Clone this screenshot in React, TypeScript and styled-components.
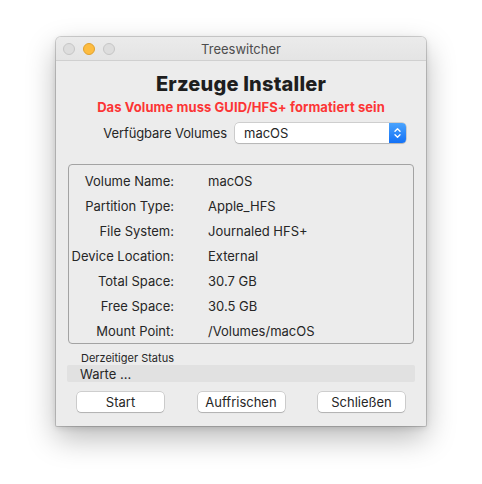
import React from 'react';
import styled, { createGlobalStyle } from 'styled-components';

const GlobalStyle = createGlobalStyle`
  html, body {
    margin: 0;
    background: #ffffff;
  }
  body {
    font-family: Inter, "Noto Sans", sans-serif;
    color: #262626;
    -webkit-font-smoothing: antialiased;
  }
`;

const Page = styled.div`
  width: 482px;
  height: 484px;
  box-sizing: border-box;
  padding: 37px 0 0 56px;
  overflow: hidden;
`;

const Window = styled.div`
  width: 370px;
  height: 389px;
  display: flex;
  flex-direction: column;
  background: #ececec;
  border-radius: 5px 5px 1px 1px;
  box-shadow: 0 0 0 1px rgba(0, 0, 0, 0.16), 0 12px 30px rgba(0, 0, 0, 0.28), 0 2px 6px rgba(0, 0, 0, 0.12);
  overflow: hidden;
`;

const TitleBar = styled.div`
  height: 23px;
  flex: none;
  display: grid;
  grid-template-columns: 1fr auto 1fr;
  align-items: center;
  background: linear-gradient(#ebebeb, #e4e4e4);
  border-bottom: 1px solid #d0d0d0;
`;

const Lights = styled.div`
  display: flex;
  gap: 8px;
  padding-left: 7px;
  margin-top: 1px;
`;

const Light = styled.span<{ $color: string; $edge: string }>`
  width: 12px;
  height: 12px;
  box-sizing: border-box;
  border-radius: 50%;
  background: ${(p) => p.$color};
  border: 1px solid ${(p) => p.$edge};
`;

const Title = styled.div`
  font-size: 13px;
  color: #4d4d4d;
`;

const Content = styled.div`
  flex: 1;
  display: flex;
  flex-direction: column;
  padding: 11px 12px 0;
`;

const Heading = styled.h1`
  margin: 0;
  font-size: 20px;
  line-height: 24px;
  font-weight: 800;
  letter-spacing: 0.2px;
  text-align: center;
  color: #1e1e1e;
`;

const Warning = styled.div`
  margin-top: 3px;
  font-size: 13px;
  line-height: 16px;
  font-weight: 700;
  letter-spacing: 0.08px;
  text-align: center;
  color: #fc3535;
`;

const VolumeRow = styled.div`
  margin-top: 8px;
  display: flex;
  justify-content: flex-end;
  align-items: center;
  gap: 8px;
  padding-right: 8px;
`;

const Label = styled.span`
  font-size: 13px;
  letter-spacing: -0.1px;
`;

const Popup = styled.div`
  width: 171px;
  height: 20px;
  box-sizing: border-box;
  display: flex;
  align-items: center;
  background: #ffffff;
  border-radius: 4px;
  box-shadow: 0 0 0 0.5px rgba(0, 0, 0, 0.25), 0 1px 1px rgba(0, 0, 0, 0.12);
  overflow: hidden;
`;

const PopupText = styled.span`
  flex: 1;
  padding-left: 9px;
  font-size: 13px;
`;

const Stepper = styled.span`
  width: 17px;
  height: 20px;
  display: flex;
  align-items: center;
  justify-content: center;
  background: linear-gradient(#4aa3fd, #1371f6);
`;

const InfoBox = styled.div`
  margin-top: 21px;
  border: 1px solid #a3a3a3;
  border-radius: 4px;
  padding: 3px 0 0 1px;
  display: grid;
  grid-template-columns: 104px 1fr;
  column-gap: 34px;
  grid-auto-rows: 25px;
  align-items: center;
  font-size: 13px;
`;

const InfoKey = styled.span`
  text-align: right;
  white-space: nowrap;
`;

const InfoValue = styled.span`
  white-space: nowrap;
`;

const StatusCaption = styled.div`
  margin-top: 7px;
  padding-left: 13px;
  font-size: 11px;
  line-height: 14px;
`;

const StatusField = styled.div`
  margin: 0 -1px;
  height: 17px;
  display: flex;
  align-items: center;
  padding-left: 13px;
  background: #e1e1e1;
  border-radius: 2px;
  font-size: 13px;
`;

const ButtonRow = styled.div`
  margin-top: 10px;
  display: flex;
  justify-content: space-between;
  padding: 0 9px;
`;

const Button = styled.button`
  width: 87px;
  height: 20px;
  padding: 0;
  font-family: inherit;
  font-size: 13px;
  color: #262626;
  background: #ffffff;
  border: none;
  border-radius: 4px;
  box-shadow: 0 0 0 0.5px rgba(0, 0, 0, 0.25), 0 1px 1px rgba(0, 0, 0, 0.14);
`;

const info: [string, string][] = [
  ['Volume Name:', 'macOS'],
  ['Partition Type:', 'Apple_HFS'],
  ['File System:', 'Journaled HFS+'],
  ['Device Location:', 'External'],
  ['Total Space:', '30.7 GB'],
  ['Free Space:', '30.5 GB'],
  ['Mount Point:', '/Volumes/macOS'],
];

function Chevrons() {
  return (
    <svg width="9" height="12" viewBox="0 0 9 12" fill="none" stroke="#ffffff" strokeWidth="1.4" strokeLinecap="round" strokeLinejoin="round">
      <path d="M2 4.2 L4.5 1.7 L7 4.2" />
      <path d="M2 7.8 L4.5 10.3 L7 7.8" />
    </svg>
  );
}

export default function App(): JSX.Element {
  return (
    <>
      <GlobalStyle />
      <Page>
        <Window>
          <TitleBar>
            <Lights>
              <Light $color="#dddddd" $edge="#c6c6c6" />
              <Light $color="#fdbc40" $edge="#e0a12e" />
              <Light $color="#dddddd" $edge="#c6c6c6" />
            </Lights>
            <Title>Treeswitcher</Title>
            <span />
          </TitleBar>
          <Content>
            <Heading>Erzeuge Installer</Heading>
            <Warning>Das Volume muss GUID/HFS+ formatiert sein</Warning>
            <VolumeRow>
              <Label>Verfügbare Volumes</Label>
              <Popup>
                <PopupText>macOS</PopupText>
                <Stepper>
                  <Chevrons />
                </Stepper>
              </Popup>
            </VolumeRow>
            <InfoBox>
              {info.map(([key, value]) => (
                <React.Fragment key={key}>
                  <InfoKey>{key}</InfoKey>
                  <InfoValue>{value}</InfoValue>
                </React.Fragment>
              ))}
            </InfoBox>
            <StatusCaption>Derzeitiger Status</StatusCaption>
            <StatusField>Warte ...</StatusField>
            <ButtonRow>
              <Button>Start</Button>
              <Button>Auffrischen</Button>
              <Button>Schließen</Button>
            </ButtonRow>
          </Content>
        </Window>
      </Page>
    </>
  );
}
